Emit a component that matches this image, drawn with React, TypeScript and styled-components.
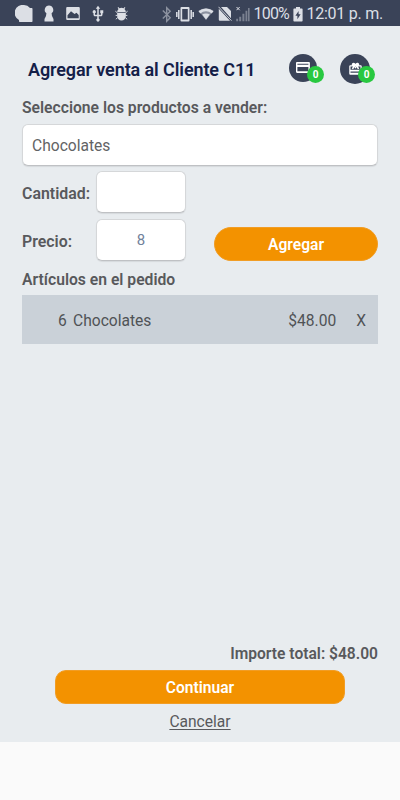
import React from "react";
import styled, { createGlobalStyle } from "styled-components";

const Global = createGlobalStyle`
  * { box-sizing: border-box; }
  html, body { margin: 0; padding: 0; background: #fafafa; }
  body { font-family: Roboto, sans-serif; color: #58595c; }
  button, input { font-family: inherit; }
`;

const Screen = styled.div`
  width: 400px;
  height: 800px;
  display: flex;
  flex-direction: column;
  overflow: hidden;
  background: #fafafa;
`;

const StatusBar = styled.header`
  height: 26px;
  flex: none;
  display: flex;
  align-items: center;
  padding: 2px 16px 0 15px;
  background: #3a4358;
  color: #dcdfe5;
`;

const Notifications = styled.div`
  display: flex;
  align-items: center;
  gap: 6.5px;
  flex: 1;
`;

const Indicators = styled.div`
  display: flex;
  align-items: center;
`;

const Glyph = styled.svg<{ $dim?: boolean; $gap?: number }>`
  display: block;
  flex: none;
  fill: currentColor;
  opacity: ${(p) => (p.$dim ? 0.5 : 1)};
  margin-right: ${(p) => p.$gap ?? 0}px;
`;

const StatusText = styled.span<{ $width: number; $spacing?: number }>`
  width: ${(p) => p.$width}px;
  flex: none;
  font-size: 16px;
  line-height: 22px;
  letter-spacing: ${(p) => p.$spacing ?? 0}px;
  white-space: nowrap;
`;

const Content = styled.main`
  height: 716px;
  flex: none;
  display: flex;
  flex-direction: column;
  padding: 0 22px;
  background: #e8ecef;
`;

const TitleRow = styled.div`
  height: 70px;
  flex: none;
  display: flex;
  align-items: flex-start;
  padding: 28px 0 0 6px;
`;

const Title = styled.h1`
  width: 261px;
  flex: none;
  margin: 4px 0 0;
  font-size: 18px;
  line-height: 24px;
  font-weight: 600;
  letter-spacing: -0.1px;
  color: #142048;
  white-space: nowrap;
`;

const RoundButton = styled.div<{ $size: number }>`
  position: relative;
  width: ${(p) => p.$size}px;
  height: ${(p) => p.$size}px;
  flex: none;
  margin-right: 23px;
  border-radius: 50%;
  display: flex;
  align-items: center;
  justify-content: center;
  background: #3a4358;
  color: #fff;
`;

const Badge = styled.span`
  position: absolute;
  left: 18px;
  top: 12px;
  width: 17px;
  height: 17px;
  border-radius: 50%;
  background: #28c840;
  font-size: 10px;
  line-height: 17px;
  font-weight: 700;
  text-align: center;
`;

const Label = styled.label<{ $width?: number }>`
  width: ${(p) => (p.$width ? `${p.$width}px` : "auto")};
  flex: none;
  font-size: 15.7px;
  line-height: 24px;
  font-weight: 600;
  white-space: nowrap;
`;

const InlineLabel = styled(Label)`
  padding-top: 4px;
  font-size: 15.9px;
`;

const Field = styled.input<{ $small?: boolean }>`
  display: block;
  width: ${(p) => (p.$small ? "90px" : "100%")};
  height: 42px;
  padding: ${(p) => (p.$small ? "0" : "2px 9px 0")};
  border: 1px solid #d5d7d9;
  border-bottom-color: #bfc1c4;
  border-radius: 6px;
  outline: none;
  background: #fff;
  box-shadow: 0 1px 1px rgba(0, 0, 0, 0.08);
  font-size: ${(p) => (p.$small ? "15px" : "15.6px")};
  text-align: ${(p) => (p.$small ? "center" : "left")};
  color: ${(p) => (p.$small ? "#71829b" : "#626365")};
`;

const FormRow = styled.div<{ $space: number }>`
  display: flex;
  align-items: center;
  flex: none;
  height: 42px;
  margin-top: ${(p) => p.$space}px;
`;

const PrimaryButton = styled.button<{ $width: number; $radius: number }>`
  width: ${(p) => p.$width}px;
  height: 34px;
  flex: none;
  padding: 2px 0 0;
  border: 1px solid #f19d25;
  border-radius: ${(p) => p.$radius}px;
  background: #f39200;
  color: #fff;
  font-size: 15.6px;
  font-weight: 600;
`;

const AddButton = styled(PrimaryButton)`
  margin: 7px 0 0 28px;
`;

const OrderLabel = styled(Label)`
  margin-top: 7px;
`;

const OrderRow = styled.div`
  height: 49px;
  flex: none;
  margin-top: 3px;
  display: flex;
  align-items: center;
  padding: 3px 12px 0 36px;
  background: #cad1d8;
  font-size: 15.6px;
  color: #505356;
`;

const Quantity = styled.span`
  width: 15px;
`;

const Product = styled.span`
  flex: 1;
`;

const Amount = styled.span`
  margin-right: 20px;
`;

const Footer = styled.footer`
  margin-top: auto;
  display: flex;
  flex-direction: column;
  align-items: center;
`;

const Total = styled(Label)`
  align-self: flex-end;
  margin-bottom: 4px;
  padding-top: 1px;
  line-height: 23px;
  font-size: 15.6px;
`;

const Cancel = styled.a`
  margin: 6px 0 8px;
  font-size: 15.6px;
  line-height: 24px;
  text-decoration: underline;
  text-decoration-thickness: 1px;
  text-underline-offset: 1.5px;
`;

function CardIcon() {
  return (
    <Glyph width="16" height="14" viewBox="0 0 16 14">
      <path fillRule="evenodd" d="M2.2 1h11.5c.8 0 1.2.5 1.2 1.2v8.6c0 .7-.4 1.2-1.2 1.2H2.2c-.8 0-1.2-.5-1.2-1.2V2.2C1 1.5 1.4 1 2.2 1Zm.2 1.7v1.1h11V2.7Zm0 3.3v4.3h11V6Z" />
    </Glyph>
  );
}

function GiftIcon() {
  return (
    <Glyph width="15" height="16" viewBox="0 0 24 24">
      <path fillRule="evenodd" d="M20 6h-2.18c.11-.31.18-.65.18-1a2.996 2.996 0 0 0-5.5-1.65l-.5.67-.5-.68C10.96 2.54 10.05 2 9 2 7.34 2 6 3.34 6 5c0 .35.07.69.18 1H4c-1.11 0-2 .89-2 2v11c0 1.11.89 2 2 2h16c1.11 0 2-.89 2-2V8c0-1.11-.89-2-2-2ZM20 18H4v-2h16Zm0-5H4V8h4l-2 3.2 2 1.3 4-4.8 4 4.8 2-1.3L16 8h4Z" />
      <path d="M11 8h2v3h-2z" />
    </Glyph>
  );
}

function NotificationIcons() {
  return (
    <Notifications>
      <Glyph width="18" height="18" viewBox="0 0 18 18">
        <path d="M9 0a8 8 0 0 1 6 3h1.5c.7 0 1 .3 1 1v12c0 .7-.3 1-1 1H5c-.7 0-1-.3-1-1v-1A8 8 0 0 1 9 0Z" />
      </Glyph>
      <Glyph width="18" height="18" viewBox="0 0 18 18">
        <path d="M9 .5a4.3 4.3 0 0 1 2.6 7.7L12 11l1.5 3v2.5h-9V14L6 11l.4-2.8A4.3 4.3 0 0 1 9 .5Z" />
      </Glyph>
      <Glyph width="18" height="18" viewBox="0 0 18 18">
        <path fillRule="evenodd" d="M3.5 2h11c.8 0 1.3.5 1.3 1.3v10.4c0 .8-.5 1.3-1.3 1.3h-11c-.8 0-1.3-.5-1.3-1.3V3.3C2.2 2.5 2.7 2 3.5 2Zm0 11.3h11.2V10l-2.2-2.3-2 1.4L7 6.3l-3.5 4Z" />
      </Glyph>
      <Glyph width="18" height="18" viewBox="0 0 24 24">
        <path d="M15 7v4h1v2h-3V5h2l-3-4-3 4h2v8H8v-2.07A2.2 2.2 0 1 0 6 10.93V13c0 1.11.89 2 2 2h3v3.05a2.2 2.2 0 1 0 2 0V15h3c1.11 0 2-.89 2-2v-2h1V7h-4z" />
      </Glyph>
      <Glyph width="17" height="18" viewBox="0 0 18 18">
        <path d="m5.6 1.6 1.2 1.3a5 5 0 0 1 4.4 0l1.2-1.3.7.7-1 1.3a4.6 4.6 0 0 1 1.5 3.6H4.4a4.6 4.6 0 0 1 1.5-3.6l-1-1.3ZM4.4 8h9.2v3.2a4.6 4.6 0 0 1-9.2 0Z" />
        <path d="M2.5 6 4.8 8M2.8 10.5h2M3 14.5 5 12.8M15.5 6 13.2 8M15.2 10.5h-2M15 14.5 13 12.8" stroke="currentColor" strokeWidth="1" />
      </Glyph>
    </Notifications>
  );
}

function SystemIndicators() {
  return (
    <Indicators>
      <Glyph $dim $gap={4} width="11" height="17" viewBox="0 0 11 17">
        <path d="m1.8 4.6 7.4 7.2-3.5 3.5V1.7l3.5 3.5-7.4 7.2" fill="none" stroke="currentColor" strokeWidth="1.4" />
      </Glyph>
      <Glyph $gap={4} width="18" height="17" viewBox="0 0 18 17">
        <path fillRule="evenodd" d="M5.5 1h7q1 0 1 1v12.5q0 1-1 1h-7q-1 0-1-1V2q0-1 1-1Zm.7 2v10.5h5.6V3Z" />
        <path d="M2.8 4v9M.8 6v5M15.2 4v9M17.2 6v5" stroke="currentColor" strokeWidth="1.5" />
      </Glyph>
      <Glyph $gap={4} width="16" height="14" viewBox="0 0 16 14">
        <path opacity=".5" d="M8 13 .5 3.8a12 12 0 0 1 15 0Z" />
        <path d="M8 12.5 4.3 7.6C6.3 6.2 9.7 6.2 11.7 7.6Z" />
        <path d="M.5 4.2a12 12 0 0 1 15 0L13.7 6.4a9 9 0 0 0-11.4 0Z" />
      </Glyph>
      <Glyph $gap={4} width="14" height="16" viewBox="0 0 14 16">
        <path d="M3 1h6L13 5v7.2ZM.8 2.7 12 14.7H1.8q-1 0-1-1Z" />
        <path d="m.5 .8 13 13.9" stroke="currentColor" strokeWidth=".9" />
      </Glyph>
      <Glyph $gap={4} width="14" height="17" viewBox="0 0 14 17">
        <path d="m.5 1 3.2 3.2m0-3.2L.5 4.2" stroke="currentColor" strokeWidth="1" />
        <path opacity=".4" d="M.2 12.7h1.9v2.5H.2Zm3-2h2v4.5h-2Zm3.2-3h2v7.5h-2Zm3.1-3h1.8v10.5H9.5ZM12 2h1.6v13.2H12Z" />
      </Glyph>
      <StatusText $width={39} $spacing={-0.8}>100%</StatusText>
      <Glyph $gap={4} width="10" height="17" viewBox="0 0 10 17">
        <path fillRule="evenodd" d="M3 1h4v1.5h1.8q.8 0 .8.8v11.5q0 .8-.8.8H1.2q-.8 0-.8-.8V3.3q0-.8.8-.8H3Zm2.6 4L2.4 9.7h2v3.5l3.2-5h-2Z" />
      </Glyph>
      <StatusText $width={77.5} $spacing={-0.25}>12:01 p. m.</StatusText>
    </Indicators>
  );
}

export default function App() {
  return (
    <Screen>
      <Global />
      <StatusBar>
        <NotificationIcons />
        <SystemIndicators />
      </StatusBar>
      <Content>
        <TitleRow>
          <Title>Agregar venta al Cliente C11</Title>
          <RoundButton $size={28}>
            <CardIcon />
            <Badge>0</Badge>
          </RoundButton>
          <RoundButton $size={30}>
            <GiftIcon />
            <Badge>0</Badge>
          </RoundButton>
        </TitleRow>
        <Label>Seleccione los productos a vender:</Label>
        <FormRow $space={4}>
          <Field defaultValue="Chocolates" />
        </FormRow>
        <FormRow $space={5}>
          <InlineLabel $width={74}>Cantidad:</InlineLabel>
          <Field $small />
        </FormRow>
        <FormRow $space={6}>
          <InlineLabel $width={74}>Precio:</InlineLabel>
          <Field $small defaultValue="8" />
          <AddButton $width={164} $radius={17}>Agregar</AddButton>
        </FormRow>
        <OrderLabel>Artículos en el pedido</OrderLabel>
        <OrderRow>
          <Quantity>6</Quantity>
          <Product>Chocolates</Product>
          <Amount>$48.00</Amount>
          <span>X</span>
        </OrderRow>
        <Footer>
          <Total>Importe total: $48.00</Total>
          <PrimaryButton $width={290} $radius={11}>Continuar</PrimaryButton>
          <Cancel>Cancelar</Cancel>
        </Footer>
      </Content>
    </Screen>
  );
}
